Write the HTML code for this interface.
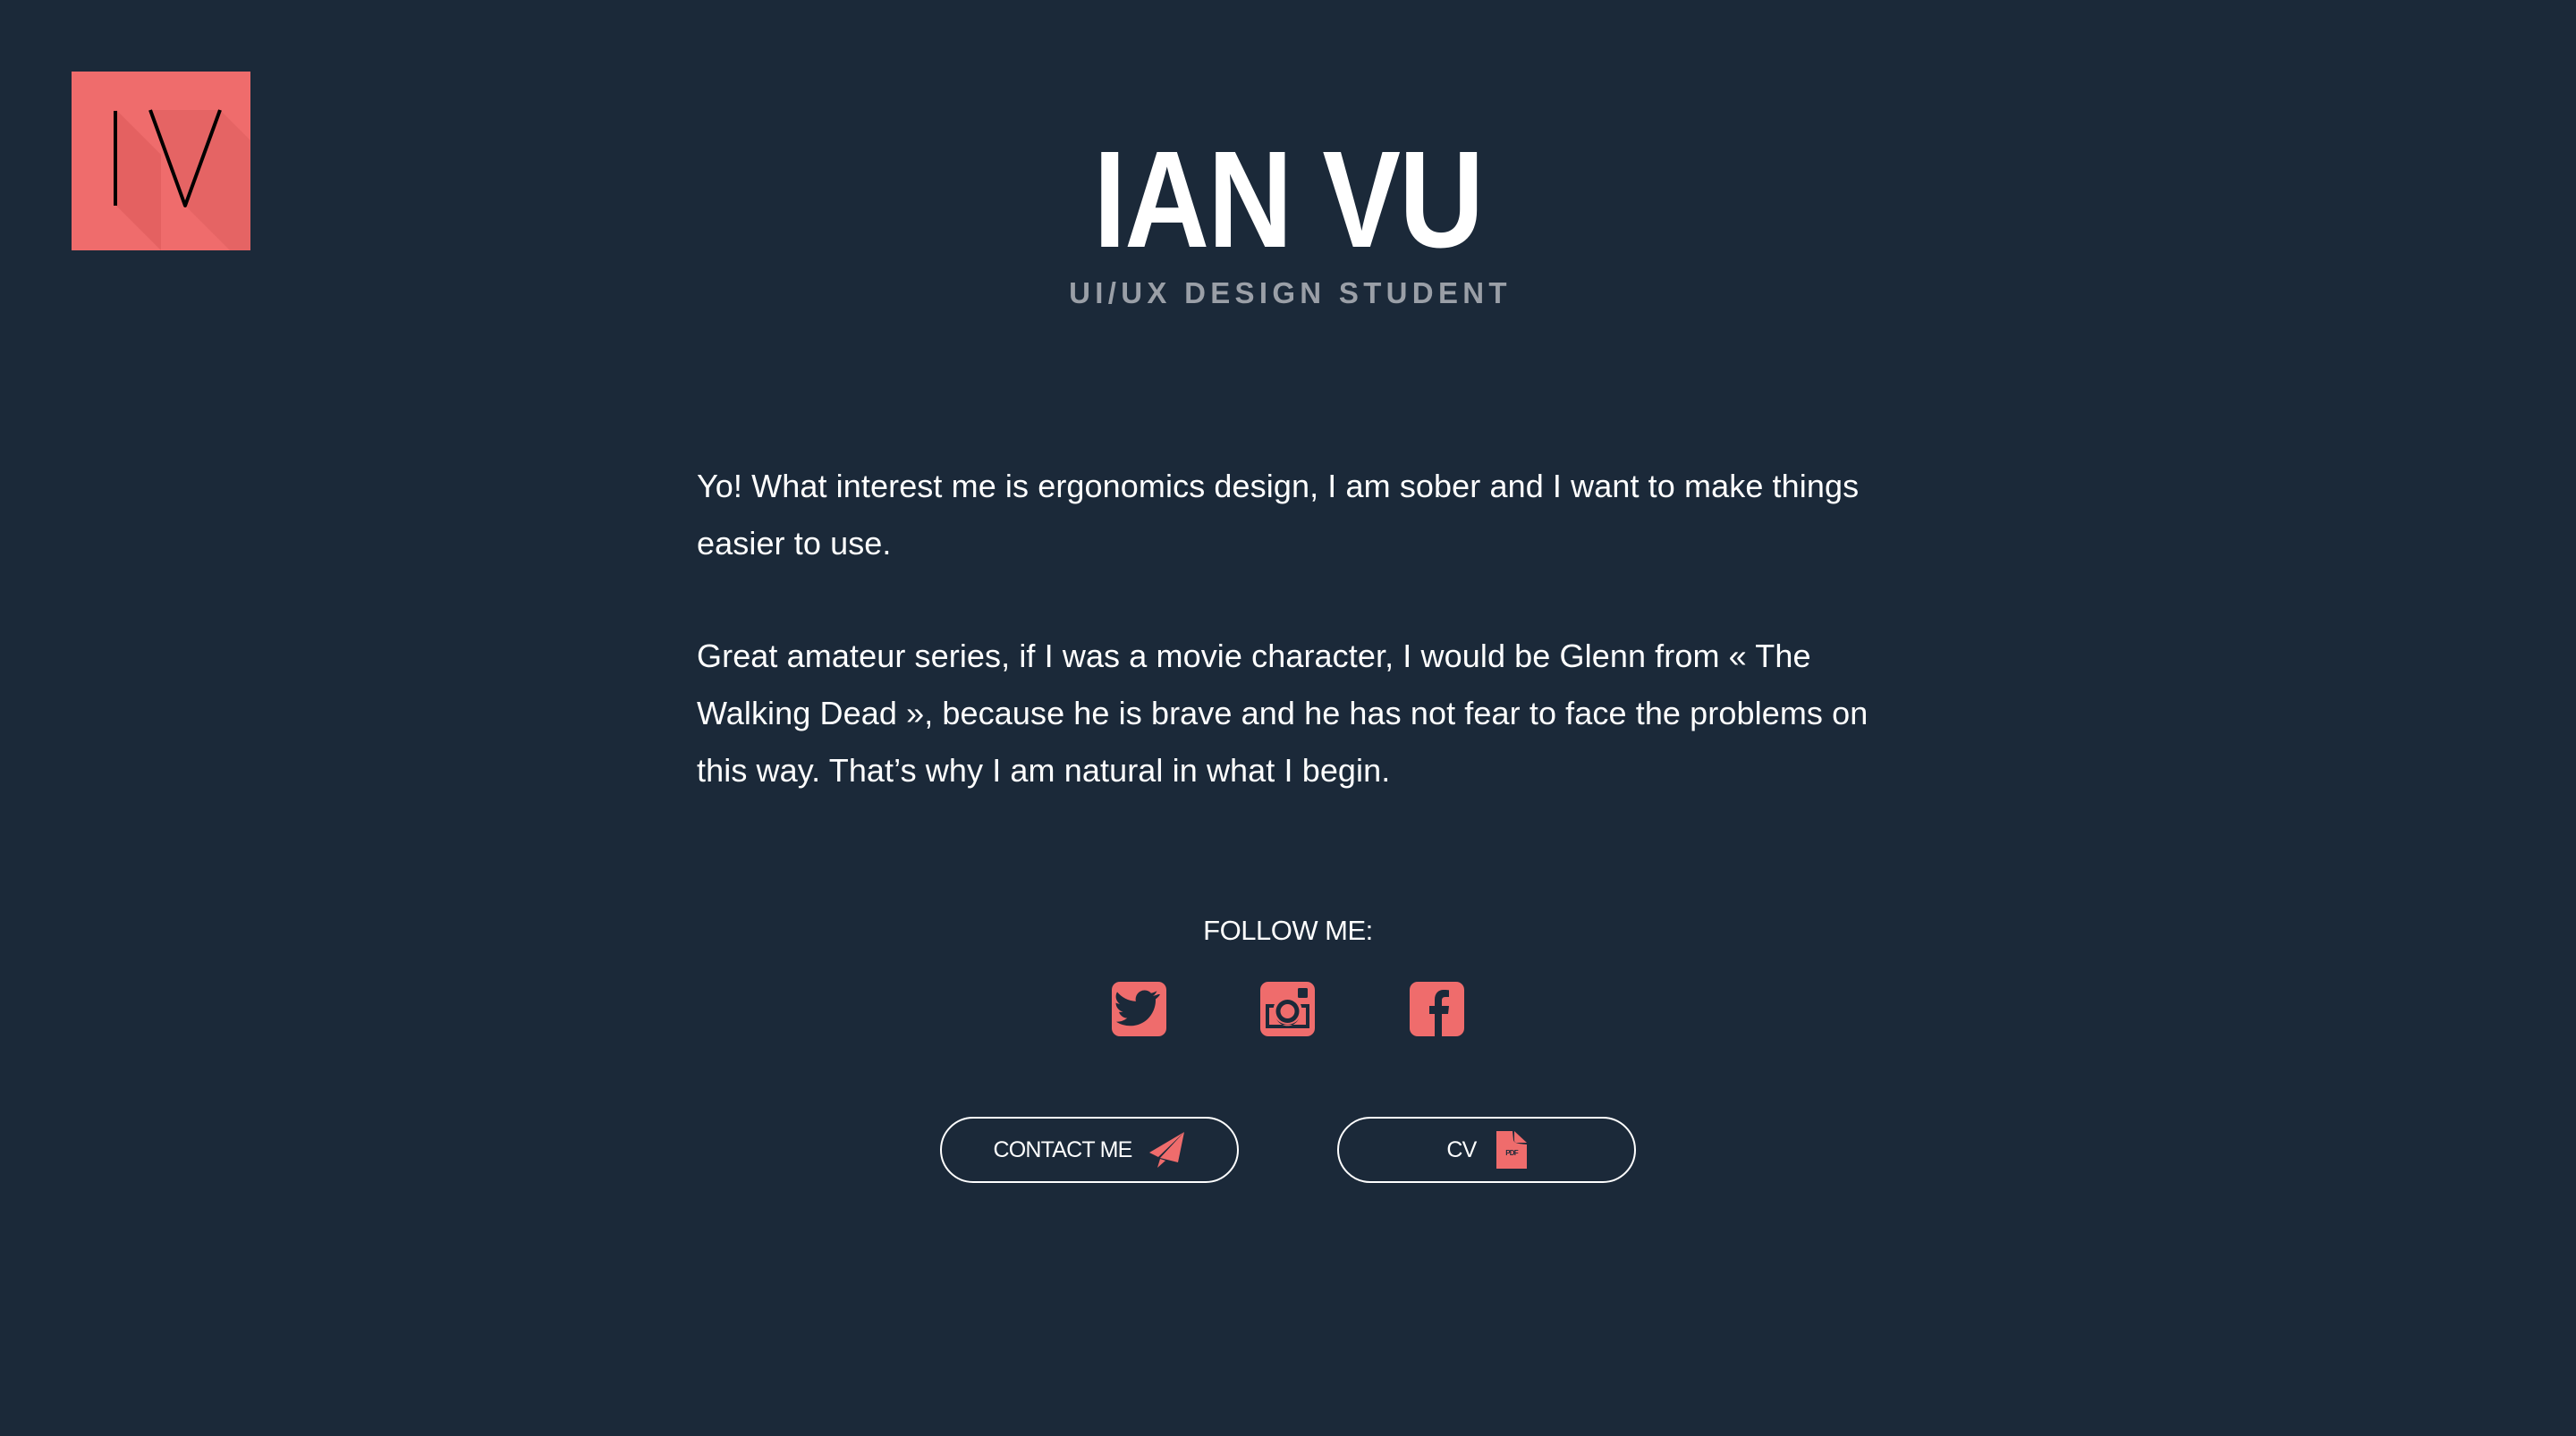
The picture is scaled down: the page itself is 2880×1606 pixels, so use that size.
<!DOCTYPE html>
<html><head><meta charset="utf-8">
<style>
html,body{margin:0;padding:0;}
body{width:2880px;height:1606px;background:#1b2939;position:relative;overflow:hidden;font-family:"Liberation Sans",sans-serif;color:#fff;}
.abs{position:absolute;}
#title{left:0;width:2880px;top:138px;text-align:center;font-weight:bold;font-size:154px;line-height:170px;}
#title span{display:inline-block;transform:scaleX(0.853);letter-spacing:-2px;}
#sub{left:0;width:2880px;top:308px;text-align:center;font-weight:bold;font-size:33px;letter-spacing:5.3px;color:#9a9fa7;line-height:40px;padding-left:5px;box-sizing:border-box;}
#para{left:779px;top:512px;font-size:36px;line-height:64px;white-space:nowrap;letter-spacing:0.1px;}
#para p{margin:0 0 62px 0;}
#follow{left:0;width:2880px;top:1019px;text-align:center;font-size:31px;line-height:44px;letter-spacing:-0.5px;}
.btn{top:1249px;width:330px;height:70px;border:2.5px solid #fff;border-radius:38px;font-size:25px;letter-spacing:-0.8px;display:flex;align-items:center;justify-content:center;}
</style></head><body>
<svg class="abs" style="left:80px;top:80px" width="200" height="200" viewBox="0 0 200 200">
<rect width="200" height="200" fill="#ef6c6c"/>
<polygon points="50,43 100,93 100,200 50,150" fill="#e06060" opacity="0.7"/>
<polygon points="50,150 100,200 100,93 50,43" fill="#e45f5f" opacity="0.5"/>
<polygon points="89,43 166,43 200,77 200,200 177,200 127,150" fill="#e26161" opacity="0.75"/>
<line x1="49" y1="44" x2="49" y2="150" stroke="#000" stroke-width="4"/>
<polyline points="88,43 127,150 166,43" fill="none" stroke="#000" stroke-width="4" stroke-linejoin="round"/>
</svg>
<div id="title" class="abs"><span>IAN VU</span></div>
<div id="sub" class="abs">UI/UX DESIGN STUDENT</div>
<div id="para" class="abs">
<p>Yo! What interest me is ergonomics design, I am sober and I want to make things<br>easier to use.</p>
<p>Great amateur series, if I was a movie character, I would be Glenn from « The<br>Walking Dead », because he is brave and he has not fear to face the problems on<br>this way. That’s why I am natural in what I begin.</p>
</div>
<div id="follow" class="abs">FOLLOW ME:</div>
<svg class="abs" style="left:1243px;top:1098px" width="61" height="61" viewBox="0 0 61 61">
<rect width="61" height="61" rx="9" fill="#ef6c6c"/>
<path d="M52 14c-2 1-4 1.5-6 1.8 2-1.3 3.6-3.3 4.4-5.6-2 1.2-4.2 2-6.5 2.5a10 10 0 0 0-17 9.2C18.5 21.5 11 17.5 6 11.4c-2.8 4.8-1.200 10.400 3 13.300-1.600 0-3.200-.5-4.500-1.200 0 4.800 3.400 9 8 10-1.500.4-3 .5-4.500.2 1.300 4 5 6.800 9.300 6.900A20 20 0 0 1 5 44.800 28.500 28.500 0 0 0 20.400 49.300c18.500 0 28.600-15.300 28.600-28.600v-1.300c2-1.400 3.700-3.200 5-5.400z" fill="#1b2939"/>
</svg>
<svg class="abs" style="left:1409px;top:1098px" width="61" height="61" viewBox="0 0 61 61">
<rect width="61" height="61" rx="9" fill="#ef6c6c"/>
<rect x="42" y="7" width="11" height="11" rx="1.5" fill="#1b2939"/>
<path d="M6 25h10a16 16 0 1 0 29 0h10v27H6z" fill="#1b2939"/>
<path d="M10 29h8a14 14 0 1 0 25 0h8v19H10z" fill="#ef6c6c"/>
<circle cx="30.5" cy="33" r="13" fill="#1b2939"/>
<circle cx="30.5" cy="33" r="8" fill="#ef6c6c"/>
</svg>
<svg class="abs" style="left:1576px;top:1098px" width="61" height="61" viewBox="0 0 61 61">
<rect width="61" height="61" rx="9" fill="#ef6c6c"/>
<path d="M28 61V36h-6v-9h6v-7c0-7 4-11 10-11 3 0 5 .2 6 .4V17h-4c-3 0-4 1.500-4 4v6h8l-1 9h-7v25z" fill="#1b2939"/>
</svg>
<div class="btn abs" style="left:1051px">CONTACT ME
<svg style="margin-left:18px" width="42" height="42" viewBox="0 0 42 42"><path d="M41 1L2 24l10 5z" fill="#ef6c6c"/><path d="M41 1L14 30l20 5z" fill="#ef6c6c"/><path d="M14 31l-3 10 9-8z" fill="#ef6c6c"/></svg>
</div>
<div class="btn abs" style="left:1495px">CV
<svg style="margin-left:22px" width="34" height="42" viewBox="0 0 34 42"><path d="M0 0h18l1 10c1 3 3 4 15 5v27H0z" fill="#ef6c6c"/><path d="M20 0l14 13H23c-2 0-3-1-3-3z" fill="#ef6c6c"/><text x="17" y="27" font-size="8" font-family="Liberation Sans" font-weight="bold" fill="#1b2939" text-anchor="middle">PDF</text></svg>
</div>
</body></html>
